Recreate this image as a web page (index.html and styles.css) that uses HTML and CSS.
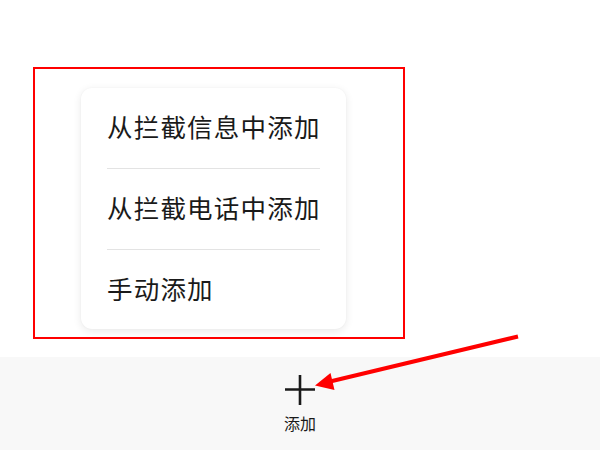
FILE: index.html
```html
<!DOCTYPE html>
<html lang="zh-CN">
<head>
<meta charset="utf-8">
<title>添加</title>
<link rel="stylesheet" href="styles.css">
</head>
<body>
<div class="page">
  <div class="top">
    <div class="highlight">
      <div class="menu">
        <div class="item">从拦截信息中添加</div>
        <div class="sep"></div>
        <div class="item">从拦截电话中添加</div>
        <div class="sep"></div>
        <div class="item last">手动添加</div>
      </div>
    </div>
  </div>
  <div class="bar">
    <div class="add">
      <svg class="plus" width="30" height="30" viewBox="0 0 30 30">
        <path d="M0 14.5H30M15 0V30" stroke="#1a1a1a" stroke-width="2.6" fill="none"/>
      </svg>
      <span class="label">添加</span>
    </div>
  </div>
  <svg class="arrow" width="600" height="450" viewBox="0 0 600 450">
    <line x1="518" y1="336.5" x2="328" y2="382" stroke="#ff0000" stroke-width="4" stroke-linecap="butt"/>
    <polygon points="315,385.5 330.5,373 334.5,390" fill="#ff0000"/>
  </svg>
</div>
</body>
</html>
```

FILE: styles.css
```css
html, body {
  margin: 0;
  padding: 0;
  background: #ffffff;
}
body {
  font-family: "Noto Sans CJK SC", "Noto Sans", sans-serif;
  color: #1a1a1a;
}
.page {
  position: relative;
  width: 600px;
  height: 450px;
  overflow: hidden;
}
.top {
  height: 357px;
  box-sizing: border-box;
  padding: 67px 0 0 33px;
}
.highlight {
  width: 372px;
  height: 272px;
  box-sizing: border-box;
  border: 2px solid #ff0000;
  padding: 19px 0 0 46px;
}
.menu {
  width: 265px;
  height: 241px;
  box-sizing: border-box;
  background: #ffffff;
  border-radius: 11px;
  box-shadow: 0 2px 8px rgba(0, 0, 0, 0.09), 0 0 2px rgba(0, 0, 0, 0.04);
  padding: 0 26px 0 26px;
  display: flex;
  flex-direction: column;
}
.item {
  height: 80px;
  box-sizing: border-box;
  padding-bottom: 5px;
  display: flex;
  align-items: center;
  font-size: 25.5px;
  letter-spacing: 1.2px;
  white-space: nowrap;
  color: #1a1a1a;
}
.item.last {
  height: 79px;
}
.sep {
  height: 1px;
  background: #e3e3e3;
}
.bar {
  height: 93px;
  background: #f8f8f8;
  display: flex;
  justify-content: center;
}
.add {
  display: flex;
  flex-direction: column;
  align-items: center;
  padding-top: 18px;
}
.plus {
  display: block;
}
.label {
  margin-top: 7px;
  font-size: 16px;
  line-height: 22px;
  color: #1a1a1a;
}
.arrow {
  position: absolute;
  left: 0;
  top: 0;
  pointer-events: none;
}
```
